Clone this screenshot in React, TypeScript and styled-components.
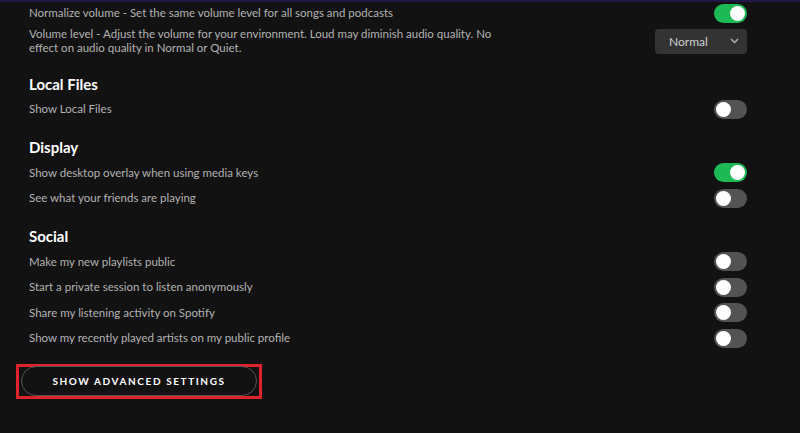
import React from 'react'
import styled, { createGlobalStyle } from 'styled-components'

const Global = createGlobalStyle`
  html, body {
    margin: 0;
    padding: 0;
    background: #121212;
  }
  body {
    font-family: Lato, "Noto Sans", sans-serif;
    color: #b3b3b3;
  }
`

type Row = { label: string; on?: boolean }
type Section = { title?: string; rows: Row[] }

const sections: Section[] = [
  { title: 'Local Files', rows: [{ label: 'Show Local Files' }] },
  {
    title: 'Display',
    rows: [
      { label: 'Show desktop overlay when using media keys', on: true },
      { label: 'See what your friends are playing' },
    ],
  },
  {
    title: 'Social',
    rows: [
      { label: 'Make my new playlists public' },
      { label: 'Start a private session to listen anonymously' },
      { label: 'Share my listening activity on Spotify' },
      { label: 'Show my recently played artists on my public profile' },
    ],
  },
]

export default function App() {
  return (
    <>
      <Global />
      <Page>
        <Setting $h="22px">
          <Label>Normalize volume - Set the same volume level for all songs and podcasts</Label>
          <Toggle $on />
        </Setting>
        <Setting $h="34.5px">
          <Label>
            Volume level - Adjust the volume for your environment. Loud may diminish audio quality. No
            <br />
            effect on audio quality in Normal or Quiet.
          </Label>
          <Select>
            <span>Normal</span>
            <svg width="9" height="6" viewBox="0 0 9 6">
              <path d="M1 1l3.5 3.5L8 1" fill="none" stroke="#b3b3b3" strokeWidth="1.4" />
            </svg>
          </Select>
        </Setting>
        {sections.map(section => (
          <Group key={section.title}>
            <Heading>{section.title}</Heading>
            {section.rows.map(row => (
              <Setting key={row.label}>
                <Label>{row.label}</Label>
                <Toggle $on={row.on} />
              </Setting>
            ))}
          </Group>
        ))}
        <Highlight>
          <Advanced>SHOW ADVANCED SETTINGS</Advanced>
        </Highlight>
      </Page>
    </>
  )
}

const Page = styled.div`
  height: 433px;
  box-sizing: border-box;
  border-top: 2px solid #1f1847;
  padding: 0 53px 0 29px;
  display: flex;
  flex-direction: column;
`

const Group = styled.section`
  display: flex;
  flex-direction: column;
  padding-top: 17px;
`

const Heading = styled.h3`
  margin: 0 0 4px;
  font-size: 15px;
  font-weight: 700;
  color: #fff;
  height: 17px;
  line-height: 17px;
`

const Setting = styled.div<{ $h?: string }>`
  display: flex;
  align-items: center;
  justify-content: space-between;
  height: ${p => p.$h ?? '25.5px'};
  flex-shrink: 0;
`

const Label = styled.div`
  font-size: 11.5px;
  line-height: 14px;
  color: #b3b3b3;
`

const Toggle = styled.span<{ $on?: boolean }>`
  position: relative;
  width: 33px;
  height: 19px;
  border-radius: 10px;
  background: ${p => (p.$on ? '#1db954' : '#535353')};
  flex-shrink: 0;

  &::after {
    content: '';
    position: absolute;
    top: 2px;
    left: ${p => (p.$on ? '16px' : '2px')};
    width: 15px;
    height: 15px;
    border-radius: 50%;
    background: #fff;
  }
`

const Select = styled.div`
  width: 92px;
  height: 25px;
  box-sizing: border-box;
  border-radius: 4px;
  background: #333;
  display: flex;
  align-items: center;
  justify-content: space-between;
  padding: 0 8px 0 14px;
  font-size: 12px;
  color: #d0d0d0;
`

const Highlight = styled.div`
  margin-top: 12.5px;
  margin-left: -13px;
  width: 246px;
  height: 35px;
  box-sizing: border-box;
  border: 3px solid #e0222c;
  display: flex;
  align-items: center;
  justify-content: center;
`

const Advanced = styled.button`
  width: 236px;
  height: 30px;
  border-radius: 15px;
  border: 1px solid #555;
  background: transparent;
  color: #fff;
  font-family: Lato, "Noto Sans", sans-serif;
  font-size: 10px;
  font-weight: 700;
  letter-spacing: 1.6px;
  cursor: pointer;
`
